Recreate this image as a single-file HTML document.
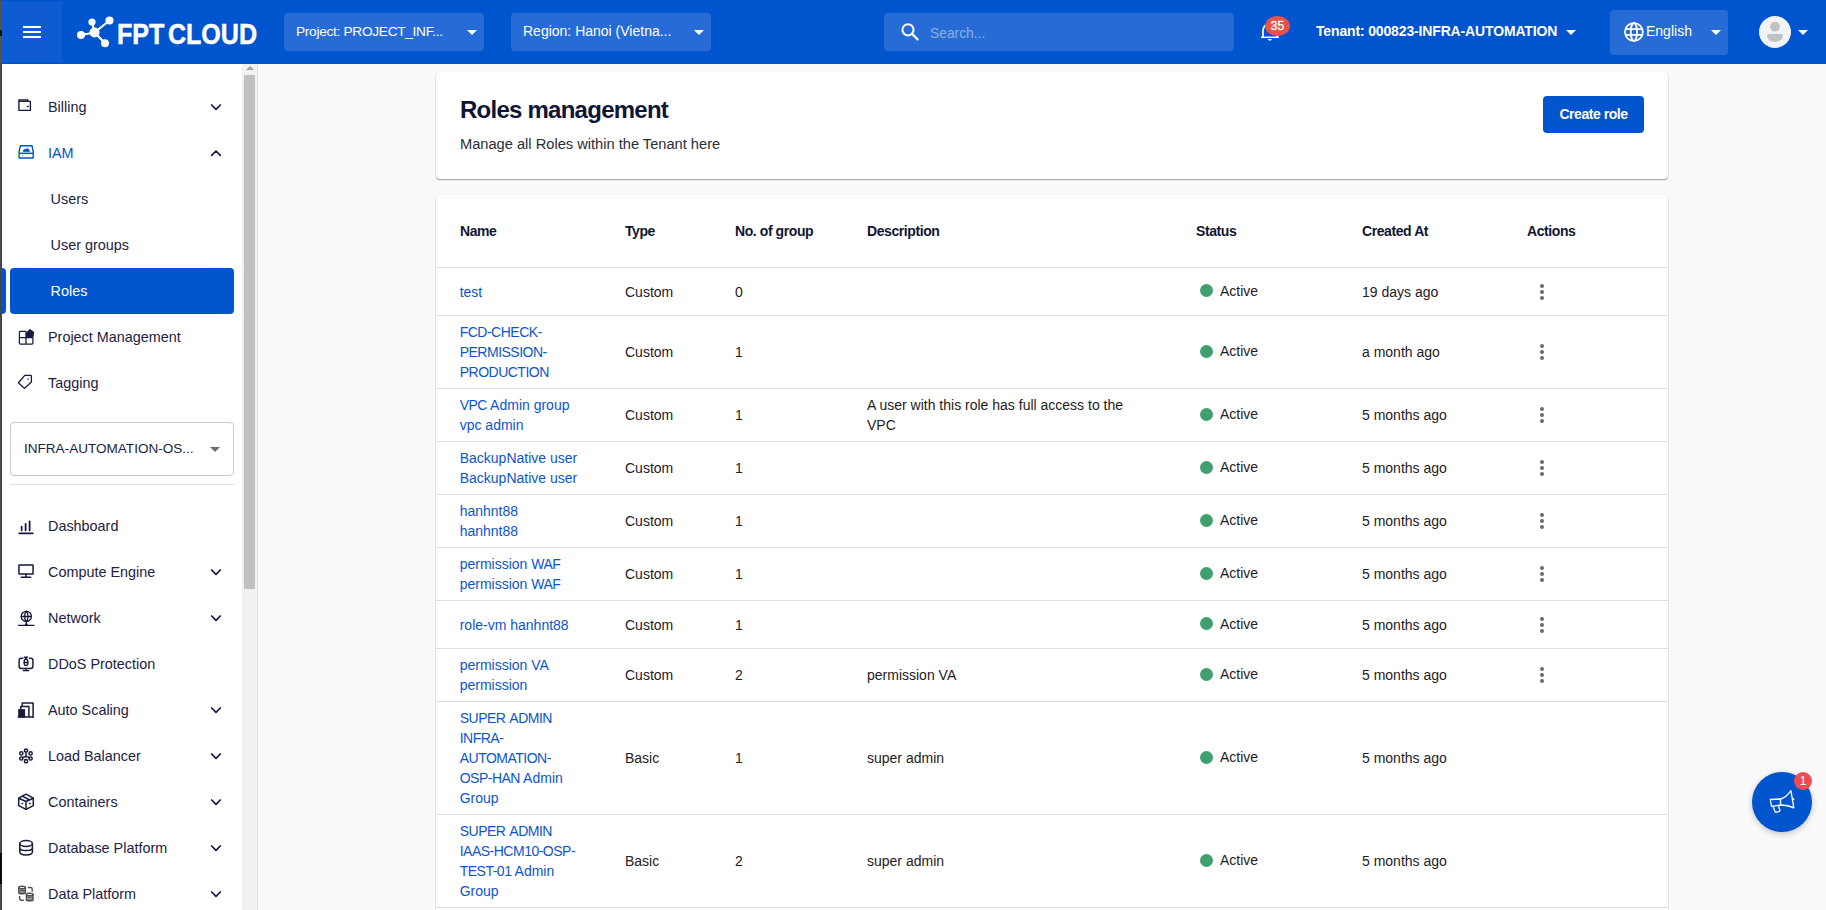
<!DOCTYPE html>
<html><head><meta charset="utf-8">
<style>
*{box-sizing:border-box;margin:0;padding:0}
html,body{width:1826px;height:910px;overflow:hidden;background:#fafafa;font-family:"Liberation Sans",sans-serif}
.abs{position:absolute}
#edge{left:0;top:0;width:2px;height:910px;background:#474747;z-index:50}
#hdr{left:0;top:0;width:1826px;height:64px;background:#0054ce}
#ham{left:2px;top:2px;width:60px;height:60px;background:#0f5bd2}
.hl{position:absolute;left:21px;width:18px;height:2px;background:#fff}
.pill{position:absolute;top:13px;height:38px;background:#276cd6;border-radius:4px;color:#fff;font-size:13.4px}
.pill .t{position:absolute;left:12px;top:11px;white-space:nowrap;line-height:16px}
.tri{position:absolute;width:0;height:0;border-left:5px solid transparent;border-right:5px solid transparent;border-top:5px solid #fff}
#side{left:2px;top:64px;width:240px;height:846px;background:#fff}
#sb{left:242px;top:64px;width:16px;height:846px;background:#f1f1f1;border-right:1px solid #e4e4e4}
#thumb{left:244px;top:75px;width:11px;height:514px;background:#c1c1c1}
#sbup{left:246px;top:66px;width:0;height:0;border-left:4px solid transparent;border-right:4px solid transparent;border-bottom:4px solid #a3a3a3}
.nav{position:absolute;left:2px;width:240px;height:46px;color:#1c2143;font-size:14.4px}
.nav .lbl{position:absolute;left:46px;top:13px;white-space:nowrap;line-height:20px}
.nav .ic{position:absolute;left:15px;top:14px;overflow:visible}
.nav .chev{position:absolute;left:208px;top:19px;overflow:visible}
.sel{position:absolute;left:10px;width:224px;height:46px;background:#0054ce;border-radius:4px}
.selmark{position:absolute;left:0;width:6px;height:46px;background:#0054ce;border-radius:0 4px 4px 0}
.card{position:absolute;left:436px;width:1232px;background:#fff;border-radius:4px;box-shadow:0 1px 1.5px rgba(0,0,0,.38),0 0 1px rgba(0,0,0,.10)}
.tr{position:absolute;left:0;width:1232px;border-bottom:1px solid #e0e0e0}
.c{position:absolute;top:50%;transform:translateY(-50%);font-size:14px;line-height:20px;color:#1f2023;white-space:nowrap}
.lnk{color:#0b55d0}
.cap{letter-spacing:-0.5px}
.th{position:absolute;top:25.5px;font-weight:bold;font-size:14px;letter-spacing:-0.42px;line-height:20px;color:#101633;white-space:nowrap}
.dot{display:inline-block;width:13px;height:13px;border-radius:50%;background:#419f6f;margin-right:7px}
.kb{position:absolute;left:1104px;top:50%;margin-top:-8px;width:4px;height:16px}
.kb i{display:block;width:4px;height:4px;border-radius:50%;background:#6b6b6b;margin-bottom:2px}
</style></head><body>
<div id="edge" class="abs"><div class="abs" style="left:0;top:0;width:2px;height:64px;background:#56524b"></div><div class="abs" style="left:0;top:30px;width:2px;height:6px;background:#111"></div><div class="abs" style="left:0;top:853px;width:2px;height:31px;background:#0a0a0a"></div></div>
<div id="hdr" class="abs">
  <div id="ham" class="abs">
    <div class="hl" style="top:24px"></div><div class="hl" style="top:29px"></div><div class="hl" style="top:34px"></div>
  </div>
  <svg class="abs" style="left:76px;top:15px" width="40" height="34" viewBox="76 15 40 34">
    <g stroke="#fff" stroke-width="2.2"><line x1="94.5" y1="32.5" x2="92" y2="22"/><line x1="94.5" y1="32.5" x2="109.5" y2="20.5"/><line x1="94.5" y1="32.5" x2="81" y2="35"/><line x1="94.5" y1="32.5" x2="105" y2="43.3"/></g>
    <g fill="#fff"><circle cx="94.5" cy="32.5" r="5"/><circle cx="92" cy="22" r="3.6"/><circle cx="109.5" cy="20.5" r="4"/><circle cx="81" cy="35" r="4"/><circle cx="105" cy="43.3" r="4"/></g>
  </svg>
  <div class="abs" style="left:117px;top:17px;font-size:29px;font-weight:bold;color:#fff;line-height:34px;transform:scaleX(0.865);transform-origin:0 0;white-space:nowrap;word-spacing:-4px;-webkit-text-stroke:0.5px #fff">FPT CLOUD</div>
  <div class="pill" style="left:284px;width:200px"><span class="t" style="top:10.6px;font-size:13.7px;letter-spacing:-0.3px">Project: PROJECT_INF...</span><div class="tri" style="left:183px;top:17px"></div></div>
  <div class="pill" style="left:511px;width:200px"><span class="t" style="top:10.4px;font-size:14px">Region: Hanoi (Vietna...</span><div class="tri" style="left:183px;top:17px"></div></div>
  <div class="pill" style="left:884px;width:350px;height:38px">
    <svg class="abs" style="left:16px;top:9px" width="20" height="20" viewBox="0 0 20 20"><circle cx="8" cy="7.8" r="5.6" fill="none" stroke="#fff" stroke-width="2"/><path d="M12 11.8 L17.6 17.4" stroke="#fff" stroke-width="2.2" stroke-linecap="round"/></svg>
    <span class="t" style="left:46px;top:13px;color:#8fb0e6;font-size:13.8px">Search...</span></div>
  <svg class="abs" style="left:1258px;top:18px" width="26" height="26" viewBox="0 0 26 26"><path d="M5 19.3 V13 C5 8.8 7.5 6 12 6 C16.5 6 19 8.8 19 13 V19.3" fill="none" stroke="#fff" stroke-width="1.7"/><path d="M3 19.3 H21" stroke="#fff" stroke-width="1.5"/><path d="M9.8 21 H13.8 Q13.3 22.8 11.8 22.8 Q10.3 22.8 9.8 21 Z" fill="#fff"/></svg>
  <div class="abs" style="left:1265px;top:16px;width:25px;height:20px;border-radius:50%;background:#e5534b;color:#fff;font-size:12px;text-align:center;line-height:20px;-webkit-text-stroke:0.3px #fff">35</div>
  <div class="abs" style="left:1316px;top:22px;font-size:14px;font-weight:bold;letter-spacing:-0.15px;color:#fff;white-space:nowrap;line-height:18px">Tenant: 000823-INFRA-AUTOMATION</div>
  <div class="tri" style="left:1566px;top:30px"></div>
  <div class="pill" style="left:1610px;top:10px;width:118px;height:45px">
    <svg class="abs" style="left:13px;top:12px" width="21" height="21" viewBox="0 0 21 21" fill="none" stroke="#fff" stroke-width="1.8"><circle cx="10.9" cy="10" r="8.9"/><ellipse cx="10.9" cy="10" rx="3.1" ry="8.9"/><path d="M2.5 7.1 H19.3 M2.5 12.9 H19.3"/></svg>
    <span class="t" style="left:36px;top:13px;font-size:14px">English</span>
    <div class="tri" style="left:101px;top:20px"></div>
  </div>
  <svg class="abs" style="left:1759px;top:16px" width="32" height="32" viewBox="0 0 32 32"><circle cx="16" cy="16" r="16" fill="#f2f3f5"/><circle cx="16" cy="10.7" r="4.9" fill="#c2c2c2"/><path d="M9.6 18 H22.4 Q23.9 18 23.9 19.5 C23.9 23.5 20 25.9 16 25.9 C12 25.9 8.1 23.5 8.1 19.5 Q8.1 18 9.6 18 Z" fill="#c2c2c2"/></svg>
  <div class="tri" style="left:1798px;top:30px"></div>
</div>
<div id="side" class="abs"></div>
<div class="nav" style="top:84px"><span class="lbl" style="">Billing</span><svg class="ic" width="20" height="20" viewBox="0 0 20 20" fill="none" stroke="#161b3d" stroke-width="1.35" stroke-linecap="round" stroke-linejoin="round"><path d="M1.9 12.4 V1.9 H10.9 V3.4 M1.9 3.4 H13.4 V12.4 H1.9"/><path d="M10.3 8.3 H11.4"/></svg><svg class="chev" width="12" height="9" viewBox="0 0 12 9"><path d="M1.65 2 L6 6.3 L10.3 2" fill="none" stroke="#161b3d" stroke-width="1.7" stroke-linecap="round" stroke-linejoin="round"/></svg></div>
<div class="nav" style="top:130px"><span class="lbl" style="color:#0054ce">IAM</span><svg class="ic" width="20" height="20" viewBox="0 0 20 20" fill="none" stroke="#0054ce" stroke-width="1.4" stroke-linejoin="round"><path d="M3.5 1.7 H15 L16.2 7.5 V14 H2.1 V7.5 Z"/><path d="M2.1 9.3 H16.2"/><path d="M6.3 7.6 C6 6 7.5 5 8.6 5.6 C9.4 4.3 11.8 4.6 11.9 6.3 C12.8 6.5 12.7 7.6 12 7.6 Z" fill="#0054ce" stroke-width="0.8"/><circle cx="5.3" cy="11.8" r="0.5" fill="#0054ce" stroke="none"/></svg><svg class="chev" width="12" height="9" viewBox="0 0 12 9"><path d="M1.65 6.3 L6 2 L10.3 6.3" fill="none" stroke="#161b3d" stroke-width="1.7" stroke-linecap="round" stroke-linejoin="round"/></svg></div>
<div class="nav" style="top:176px"><span class="lbl" style="left:48.6px">Users</span></div>
<div class="nav" style="top:222px"><span class="lbl" style="left:48.6px">User groups</span></div>
<div class="sel" style="top:268px"></div><div class="selmark" style="top:268px"></div>
<div class="nav" style="top:268px"><span class="lbl" style="left:48.6px;color:#fff">Roles</span></div>
<div class="nav" style="top:314px"><span class="lbl" style="">Project Management</span><svg class="ic" width="20" height="20" viewBox="0 0 20 20" fill="none" stroke="#161b3d" stroke-width="1.25" stroke-linecap="round" stroke-linejoin="round"><path d="M9 3.4 H3.4 Q2.4 3.4 2.4 4.4 V15.1 Q2.4 16.1 3.4 16.1 H14.9 Q15.9 16.1 15.9 15.1 V9.7 M9 3.4 V16.1 M2.4 9.7 H15.9"/><path d="M12.9 1.6 L16.5 4.2 L16 8.8 L10 9.6 L9.4 5.2 Z" fill="#161b3d" stroke-width="1.1"/></svg></div>
<div class="nav" style="top:360px"><span class="lbl" style="">Tagging</span><svg class="ic" width="20" height="20" viewBox="0 0 20 20" fill="none" stroke="#161b3d" stroke-width="1.3" stroke-linecap="round" stroke-linejoin="round"><path d="M7.8 1.4 H13.6 Q14.4 1.4 14.4 2.2 V8 L7.3 14.4 L1.4 8.8 Z"/><rect x="10.4" y="4.4" width="1.3" height="1.3" fill="#161b3d" stroke="none"/></svg></div>
<div class="nav" style="top:503px"><span class="lbl" style="">Dashboard</span><svg class="ic" style="top:13px" width="20" height="20" viewBox="0 0 20 20" fill="none" stroke="#161b3d" stroke-width="1.8" stroke-linecap="round" stroke-linejoin="round"><path d="M4.65 10.6 V14.3 M8.6 7.8 V14.3 M12.6 5.5 V14.3"/><path d="M2.2 17.3 H15.8"/></svg></div>
<div class="nav" style="top:549px"><span class="lbl" style="">Compute Engine</span><svg class="ic" style="top:13px" width="20" height="20" viewBox="0 0 20 20" fill="none" stroke="#161b3d" stroke-width="1.5" stroke-linecap="round" stroke-linejoin="round"><rect x="1.95" y="2.95" width="14.1" height="9.1" rx="0.4"/><path d="M9 12.1 V15.3 M4.3 15.3 H13.7"/></svg><svg class="chev" width="12" height="9" viewBox="0 0 12 9"><path d="M1.65 2 L6 6.3 L10.3 2" fill="none" stroke="#161b3d" stroke-width="1.7" stroke-linecap="round" stroke-linejoin="round"/></svg></div>
<div class="nav" style="top:595px"><span class="lbl" style="">Network</span><svg class="ic" style="top:13px" width="20" height="20" viewBox="0 0 20 20" fill="none" stroke="#161b3d" stroke-width="1.3" stroke-linecap="round" stroke-linejoin="round"><circle cx="9.3" cy="8.4" r="5.1"/><path d="M4.2 8.5 H14.4 M9.3 3.3 C7 5.5 7 11.3 9.3 13.5 M9.3 3.3 C11.6 5.5 11.6 11.3 9.3 13.5 M9.3 13.5 V15.5 L8 17.3 M9.3 15.5 L10.6 17.3 M1.5 17.3 H17"/></svg><svg class="chev" width="12" height="9" viewBox="0 0 12 9"><path d="M1.65 2 L6 6.3 L10.3 2" fill="none" stroke="#161b3d" stroke-width="1.7" stroke-linecap="round" stroke-linejoin="round"/></svg></div>
<div class="nav" style="top:641px"><span class="lbl" style="">DDoS Protection</span><svg class="ic" style="top:13px" width="20" height="20" viewBox="0 0 20 20" fill="none" stroke="#161b3d" stroke-width="1.45" stroke-linecap="round" stroke-linejoin="round"><path d="M5.7 4.3 H4.3 Q2.1 4.3 2.1 6.5 V12.3 Q2.1 14.5 4.3 14.5 H13.7 Q15.9 14.5 15.9 12.3 V6.5 Q15.9 4.3 13.7 4.3 H12.6"/><path d="M9 14.5 V16.6 M6.2 16.6 H11.8"/><rect x="7.2" y="5.2" width="3.6" height="6.3" rx="1.7"/><path d="M7.4 3.3 H10.6 M9 3.3 V5.2 M7.3 8.5 H10.7"/></svg></div>
<div class="nav" style="top:687px"><span class="lbl" style="">Auto Scaling</span><svg class="ic" style="top:13px" width="20" height="20" viewBox="0 0 20 20" fill="none" stroke="#161b3d" stroke-width="1.5" stroke-linecap="round" stroke-linejoin="round"><rect x="1.2" y="9.1" width="6.9" height="8.4" fill="#161b3d" stroke="none"/><path d="M3.8 9.1 V6.6 H11.9 V17 M5.2 6.6 V2.9 H16.1 V17.5 M1.2 16.9 H16.1"/></svg><svg class="chev" width="12" height="9" viewBox="0 0 12 9"><path d="M1.65 2 L6 6.3 L10.3 2" fill="none" stroke="#161b3d" stroke-width="1.7" stroke-linecap="round" stroke-linejoin="round"/></svg></div>
<div class="nav" style="top:733px"><span class="lbl" style="">Load Balancer</span><svg class="ic" style="top:13px" width="20" height="20" viewBox="0 0 20 20" fill="none" stroke="#161b3d" stroke-width="1.5" stroke-linecap="round" stroke-linejoin="round"><circle cx="9" cy="4.5" r="1.6"/><circle cx="4.3" cy="7.4" r="1.6"/><circle cx="13.6" cy="7.4" r="1.6"/><circle cx="4.3" cy="12.5" r="1.6"/><circle cx="13.6" cy="12.5" r="1.6"/><circle cx="9" cy="15.2" r="1.6"/><path d="M9 6.1 V10.4 M9 10.4 Q7 10.6 5.7 11.7 M9 10.4 Q11 10.6 12.2 11.7"/></svg><svg class="chev" width="12" height="9" viewBox="0 0 12 9"><path d="M1.65 2 L6 6.3 L10.3 2" fill="none" stroke="#161b3d" stroke-width="1.7" stroke-linecap="round" stroke-linejoin="round"/></svg></div>
<div class="nav" style="top:779px"><span class="lbl" style="">Containers</span><svg class="ic" style="top:13px" width="20" height="20" viewBox="0 0 20 20" fill="none" stroke="#161b3d" stroke-width="1.5" stroke-linecap="round" stroke-linejoin="round"><path d="M9 2.2 L16.3 6.2 V13.6 L9 17.3 L1.7 13.6 V6.2 Z"/><path d="M1.7 6.2 L9 9.5 L16.3 6.2 M9 9.5 V17.3 M5.3 4.2 L12.6 8"/><path d="M5.1 11.5 H5.6 M12.6 11.5 H13.1"/></svg><svg class="chev" width="12" height="9" viewBox="0 0 12 9"><path d="M1.65 2 L6 6.3 L10.3 2" fill="none" stroke="#161b3d" stroke-width="1.7" stroke-linecap="round" stroke-linejoin="round"/></svg></div>
<div class="nav" style="top:825px"><span class="lbl" style="">Database Platform</span><svg class="ic" style="top:13px" width="20" height="20" viewBox="0 0 20 20" fill="none" stroke="#161b3d" stroke-width="1.5" stroke-linecap="round" stroke-linejoin="round"><ellipse cx="9.1" cy="5.5" rx="6.3" ry="2.9"/><path d="M2.8 5.5 V14 C2.8 16 5.5 16.9 9.1 16.9 C12.7 16.9 15.4 16 15.4 14 V5.5 M2.8 9.7 C2.8 11.6 5.5 12.5 9.1 12.5 C12.7 12.5 15.4 11.6 15.4 9.7"/></svg><svg class="chev" width="12" height="9" viewBox="0 0 12 9"><path d="M1.65 2 L6 6.3 L10.3 2" fill="none" stroke="#161b3d" stroke-width="1.7" stroke-linecap="round" stroke-linejoin="round"/></svg></div>
<div class="nav" style="top:871px"><span class="lbl" style="">Data Platform</span><svg class="ic" style="top:13px" width="20" height="20" viewBox="0 0 20 20" fill="none" stroke="#505050" stroke-width="1.4" stroke-linecap="round" stroke-linejoin="round"><ellipse cx="5.1" cy="3.5" rx="3.3" ry="1.3"/><path d="M1.8 3.5 V8.9 C1.8 10 8.4 10 8.4 8.9 V3.5 M1.8 5.6 C1.8 6.5 8.4 6.5 8.4 5.6 M1.8 7.4 C1.8 8.3 8.4 8.3 8.4 7.4"/><ellipse cx="12.7" cy="10.5" rx="3.3" ry="1.3"/><path d="M9.4 10.5 V15.9 C9.4 17 16 17 16 15.9 V10.5 M9.4 12.6 C9.4 13.5 16 13.5 16 12.6 M9.4 14.4 C9.4 15.3 16 15.3 16 14.4"/><path d="M11.3 3.5 H13.6 Q15.2 3.5 15.2 5.1 V7.3 M2.6 12.4 V14.6 Q2.6 16.2 4.2 16.2 H6.3"/></svg><svg class="chev" width="12" height="9" viewBox="0 0 12 9"><path d="M1.65 2 L6 6.3 L10.3 2" fill="none" stroke="#161b3d" stroke-width="1.7" stroke-linecap="round" stroke-linejoin="round"/></svg></div>
<div class="abs" style="left:10px;top:422px;width:224px;height:54px;border:1px solid #c9c9cf;border-radius:4px">
  <span class="abs" style="left:13px;top:16px;font-size:13.55px;line-height:20px;color:#1c2143;white-space:nowrap">INFRA-AUTOMATION-OS...</span>
  <div class="tri" style="left:199px;top:24px;border-top-color:#6f6f6f"></div>
</div>
<div class="abs" style="left:10px;top:484px;width:224px;height:1px;background:#dfe0e6"></div>
<div id="sb" class="abs"></div>
<div id="thumb" class="abs"></div>
<div id="sbup" class="abs"></div>

<div class="card" style="top:72px;height:107px">
  <div class="abs" style="left:24px;top:23.5px;font-size:24px;letter-spacing:-0.75px;line-height:28px;font-weight:bold;color:#0f1535;white-space:nowrap">Roles management</div>
  <div class="abs" style="left:24px;top:62px;font-size:14.65px;line-height:20px;color:#2a2d3a;white-space:nowrap">Manage all Roles within the Tenant here</div>
  <div class="abs" style="left:1107px;top:24px;width:101px;height:37px;background:#0054ce;border-radius:4px;color:#fff;font-size:14px;letter-spacing:-0.45px;font-weight:bold;text-align:center;line-height:36px">Create role</div>
</div>
<div class="card" style="top:195px;height:740px">
  <div class="tr" style="top:0;height:73px">
    <div class="th" style="left:24px">Name</div>
    <div class="th" style="left:189px">Type</div>
    <div class="th" style="left:299px">No. of group</div>
    <div class="th" style="left:431px">Description</div>
    <div class="th" style="left:760px">Status</div>
    <div class="th" style="left:926px">Created At</div>
    <div class="th" style="left:1091px">Actions</div>
  </div>
<div class="tr" style="top:73px;height:48px"><div class="c lnk" style="left:23.7px">test</div><div class="c" style="left:189px">Custom</div><div class="c" style="left:299px">0</div><div class="c" style="left:764px;display:flex;align-items:center;margin-top:-1px"><span class="dot"></span>Active</div><div class="c" style="left:926px">19 days ago</div><div class="kb"><i></i><i></i><i></i></div></div>
<div class="tr" style="top:121px;height:73px"><div class="c lnk" style="left:23.7px"><span class="cap">FCD-CHECK-</span><br><span class="cap">PERMISSION-</span><br><span class="cap">PRODUCTION</span></div><div class="c" style="left:189px">Custom</div><div class="c" style="left:299px">1</div><div class="c" style="left:764px;display:flex;align-items:center;margin-top:-1px"><span class="dot"></span>Active</div><div class="c" style="left:926px">a month ago</div><div class="kb"><i></i><i></i><i></i></div></div>
<div class="tr" style="top:194px;height:53px"><div class="c lnk" style="left:23.7px"><span class="cap">VPC</span> Admin group<br>vpc admin</div><div class="c" style="left:189px">Custom</div><div class="c" style="left:299px">1</div><div class="c" style="left:431px">A user with this role has full access to the<br>VPC</div><div class="c" style="left:764px;display:flex;align-items:center;margin-top:-1px"><span class="dot"></span>Active</div><div class="c" style="left:926px">5 months ago</div><div class="kb"><i></i><i></i><i></i></div></div>
<div class="tr" style="top:247px;height:53px"><div class="c lnk" style="left:23.7px">BackupNative user<br>BackupNative user</div><div class="c" style="left:189px">Custom</div><div class="c" style="left:299px">1</div><div class="c" style="left:764px;display:flex;align-items:center;margin-top:-1px"><span class="dot"></span>Active</div><div class="c" style="left:926px">5 months ago</div><div class="kb"><i></i><i></i><i></i></div></div>
<div class="tr" style="top:300px;height:53px"><div class="c lnk" style="left:23.7px">hanhnt88<br>hanhnt88</div><div class="c" style="left:189px">Custom</div><div class="c" style="left:299px">1</div><div class="c" style="left:764px;display:flex;align-items:center;margin-top:-1px"><span class="dot"></span>Active</div><div class="c" style="left:926px">5 months ago</div><div class="kb"><i></i><i></i><i></i></div></div>
<div class="tr" style="top:353px;height:53px"><div class="c lnk" style="left:23.7px">permission <span class="cap">WAF</span><br>permission <span class="cap">WAF</span></div><div class="c" style="left:189px">Custom</div><div class="c" style="left:299px">1</div><div class="c" style="left:764px;display:flex;align-items:center;margin-top:-1px"><span class="dot"></span>Active</div><div class="c" style="left:926px">5 months ago</div><div class="kb"><i></i><i></i><i></i></div></div>
<div class="tr" style="top:406px;height:48px"><div class="c lnk" style="left:23.7px">role-vm hanhnt88</div><div class="c" style="left:189px">Custom</div><div class="c" style="left:299px">1</div><div class="c" style="left:764px;display:flex;align-items:center;margin-top:-1px"><span class="dot"></span>Active</div><div class="c" style="left:926px">5 months ago</div><div class="kb"><i></i><i></i><i></i></div></div>
<div class="tr" style="top:454px;height:53px"><div class="c lnk" style="left:23.7px">permission VA<br>permission</div><div class="c" style="left:189px">Custom</div><div class="c" style="left:299px">2</div><div class="c" style="left:431px">permission VA</div><div class="c" style="left:764px;display:flex;align-items:center;margin-top:-1px"><span class="dot"></span>Active</div><div class="c" style="left:926px">5 months ago</div><div class="kb"><i></i><i></i><i></i></div></div>
<div class="tr" style="top:507px;height:113px"><div class="c lnk" style="left:23.7px"><span class="cap">SUPER</span> <span class="cap">ADMIN</span><br><span class="cap">INFRA-</span><br><span class="cap">AUTOMATION-</span><br><span class="cap">OSP-HAN</span> Admin<br>Group</div><div class="c" style="left:189px">Basic</div><div class="c" style="left:299px">1</div><div class="c" style="left:431px">super admin</div><div class="c" style="left:764px;display:flex;align-items:center;margin-top:-1px"><span class="dot"></span>Active</div><div class="c" style="left:926px">5 months ago</div></div>
<div class="tr" style="top:620px;height:93px"><div class="c lnk" style="left:23.7px"><span class="cap">SUPER</span> <span class="cap">ADMIN</span><br><span class="cap">IAAS-HCM10-OSP-</span><br><span class="cap">TEST-01</span> Admin<br>Group</div><div class="c" style="left:189px">Basic</div><div class="c" style="left:299px">2</div><div class="c" style="left:431px">super admin</div><div class="c" style="left:764px;display:flex;align-items:center;margin-top:-1px"><span class="dot"></span>Active</div><div class="c" style="left:926px">5 months ago</div></div>
</div>
<div class="abs" style="left:1752px;top:772px;width:60px;height:60px;border-radius:50%;background:#0054ce;box-shadow:0 2px 6px rgba(0,0,0,.22)">
  <svg class="abs" style="left:17px;top:17px" width="27" height="27" viewBox="0 0 27 27" fill="none" stroke="#fff" stroke-width="1.3" stroke-linejoin="round" stroke-linecap="round"><path d="M1.3 10.5 L11.5 10 L11.5 16 L2.6 17.4 Z"/><path d="M11.5 10 C15.5 9 19 6 21.9 1.7 L24.8 18.9 C21 17 16 16 11.5 16"/><path d="M4.1 17.3 L6 22.6 Q6.4 23.6 7.5 23.2 L10.3 22.3 Q11.2 21.9 10.8 21 L9.4 16.5"/><path d="M24 9.5 L24.8 10.5"/></svg>
</div>
<div class="abs" style="left:1794px;top:772px;width:18px;height:18px;border-radius:50%;background:#ef4b53;color:#fff;font-size:12px;text-align:center;line-height:18px">1</div>
</body></html>
